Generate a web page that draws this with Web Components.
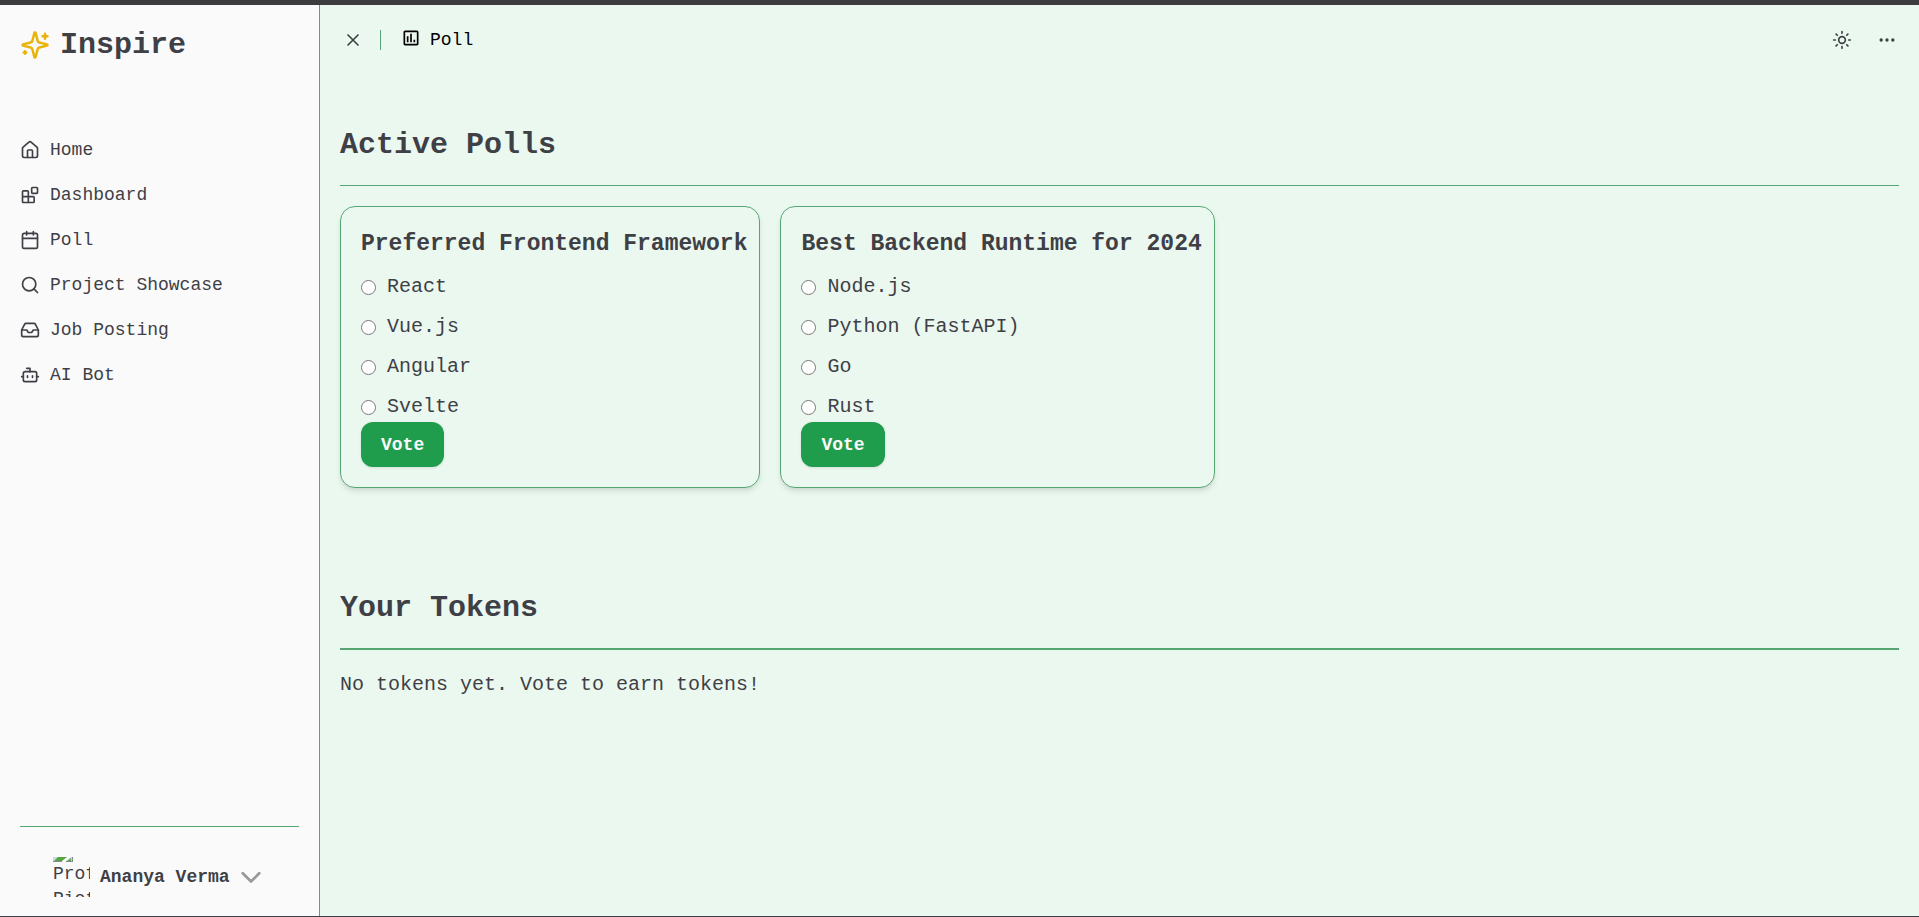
<!DOCTYPE html>
<html lang="en">
<head>
<meta charset="utf-8">
<meta name="viewport" content="width=device-width, initial-scale=1">
<title>Inspire - Poll</title>
<style>
  :root {
    --text: #3f3f46;
    --line: #55a673;
    --canvas: #ebf8ef;
    --panel: #fafafa;
    --accent: #1f9d4c;
    --frame: #3c3c3e;
  }
  body {
    margin: 0;
    color: var(--text);
    background: var(--canvas);
    font-family: "Liberation Mono", "DejaVu Sans Mono", monospace;
    font-size: 20px;
    line-height: 30px;
  }
</style>
</head>
<body>
<app-shell>
  <side-bar slot="side">
    <nav-item icon="home" href="#home">Home</nav-item>
    <nav-item icon="blocks" href="#dashboard">Dashboard</nav-item>
    <nav-item icon="calendar" href="#poll">Poll</nav-item>
    <nav-item icon="search" href="#projects">Project Showcase</nav-item>
    <nav-item icon="inbox" href="#jobs">Job Posting</nav-item>
    <nav-item icon="bot" href="#bot">AI Bot</nav-item>
    <user-menu slot="footer">Ananya Verma</user-menu>
  </side-bar>
  <top-bar>Poll</top-bar>
  <page-section heading="Active Polls">
    <poll-card heading="Preferred Frontend Framework" options="React|Vue.js|Angular|Svelte"></poll-card>
    <poll-card heading="Best Backend Runtime for 2024" options="Node.js|Python (FastAPI)|Go|Rust"></poll-card>
  </page-section>
  <page-section heading="Your Tokens" strong>
    <span>No tokens yet. Vote to earn tokens!</span>
  </page-section>
</app-shell>

<script>
const ICONS = {
  sparkles: '<path d="M9.937 15.5A2 2 0 0 0 8.5 14.063l-6.135-1.582a.5.5 0 0 1 0-.962L8.5 9.936A2 2 0 0 0 9.937 8.5l1.582-6.135a.5.5 0 0 1 .963 0L14.063 8.5A2 2 0 0 0 15.5 9.937l6.135 1.581a.5.5 0 0 1 0 .964L15.5 14.063a2 2 0 0 0-1.437 1.437l-1.582 6.135a.5.5 0 0 1-.963 0z"/><path d="M20 3v4M22 5h-4M4 17v2M5 18H3"/>',
  home: '<path d="M15 21v-8a1 1 0 0 0-1-1h-4a1 1 0 0 0-1 1v8"/><path d="M3 10a2 2 0 0 1 .709-1.528l7-5.999a2 2 0 0 1 2.582 0l7 5.999A2 2 0 0 1 21 10v9a2 2 0 0 1-2 2H5a2 2 0 0 1-2-2z"/>',
  blocks: '<rect width="7" height="7" x="14" y="3" rx="1"/><path d="M10 21V8a1 1 0 0 0-1-1H4a1 1 0 0 0-1 1v12a1 1 0 0 0 1 1h12a1 1 0 0 0 1-1v-5a1 1 0 0 0-1-1H3"/>',
  calendar: '<path d="M8 2v4M16 2v4"/><rect width="18" height="18" x="3" y="4" rx="2"/><path d="M3 10h18"/>',
  search: '<circle cx="11" cy="11" r="8"/><path d="m21 21-4.3-4.3"/>',
  inbox: '<path d="M22 12h-6l-2 3h-4l-2-3H2"/><path d="M5.45 5.11 2 12v6a2 2 0 0 0 2 2h16a2 2 0 0 0 2-2v-6l-3.45-6.89A2 2 0 0 0 16.76 4H7.24a2 2 0 0 0-1.79 1.11z"/>',
  bot: '<path d="M12 8V4H8"/><rect width="16" height="12" x="4" y="8" rx="2"/><path d="M2 14h2M20 14h2M15 13v2M9 13v2"/>',
  close: '<path d="M18 6 6 18M6 6l12 12"/>',
  sun: '<circle cx="12" cy="12" r="4"/><path d="M12 2v2M12 20v2M4.93 4.93l1.41 1.41M17.66 17.66l1.41 1.41M2 12h2M20 12h2M6.34 17.66l-1.41 1.41M19.07 4.93l-1.41 1.41"/>',
  dots: '<circle cx="12" cy="12" r="1"/><circle cx="19" cy="12" r="1"/><circle cx="5" cy="12" r="1"/>',
  chevron: '<path d="m3 8 9 9 9-9"/>',
  chart: '<path fill="currentColor" stroke="none" d="M19 3H5c-1.100 0-2 .9-2 2v14c0 1.100.9 2 2 2h14c1.100 0 2-.9 2-2V5c0-1.100-.9-2-2-2zm0 16H5V5h14v14zM7 10h2v7H7zM11 7h2v10h-2zM15 14h2v3h-2z"/>'
};

function mount(host, html) {
  host.attachShadow({ mode: 'open' }).innerHTML = html;
}

customElements.define('line-icon', class extends HTMLElement {
  connectedCallback() {
    if (this.shadowRoot) return;
    const weight = this.getAttribute('weight') || 2;
    mount(this, `<style>
      :host { display: block; flex: none; width: var(--size, 20px); height: var(--size, 20px); }
      svg { display: block; width: 100%; height: 100%; }
    </style>
    <svg viewBox="0 0 24 24" fill="none" stroke="currentColor" stroke-width="${weight}" stroke-linecap="round" stroke-linejoin="round" aria-hidden="true">${ICONS[this.getAttribute('name')]}</svg>`);
  }
});

customElements.define('app-shell', class extends HTMLElement {
  connectedCallback() {
    mount(this, `<style>
      :host { display: grid; grid-template-columns: 320px minmax(0, 1fr); box-sizing: border-box;
        min-height: 100vh; border-top: 5px solid var(--frame); border-bottom: 1px solid var(--text); }
      main { padding: 0 20px; }
    </style>
    <slot name="side"></slot><main><slot></slot></main>`);
  }
});

customElements.define('side-bar', class extends HTMLElement {
  connectedCallback() {
    mount(this, `<style>
      :host { display: flex; flex-direction: column; box-sizing: border-box; padding: 0 20px;
        background: var(--panel); border-right: 1px solid var(--line); }
      header { display: flex; align-items: center; gap: 10px; height: 80px; font-size: 30px; font-weight: 700; }
      header line-icon { --size: 30px; color: #eab308; }
      nav { display: flex; flex-direction: column; gap: 5px; padding-top: 45px; }
      footer { margin-top: auto; border-top: 1px solid var(--line); }
    </style>
    <header><line-icon name="sparkles"></line-icon><span>Inspire</span></header>
    <nav><slot></slot></nav>
    <footer><slot name="footer"></slot></footer>`);
  }
});

customElements.define('nav-item', class extends HTMLElement {
  connectedCallback() {
    mount(this, `<style>
      :host { display: block; }
      a { display: flex; align-items: center; gap: 10px; height: 40px; color: inherit; text-decoration: none; font-size: 18px; }
    </style>
    <a href="${this.getAttribute('href')}"><line-icon name="${this.getAttribute('icon')}"></line-icon><span><slot></slot></span></a>`);
  }
});

customElements.define('user-menu', class extends HTMLElement {
  connectedCallback() {
    mount(this, `<style>
      :host { display: block; padding: 30px 33px 19px; }
      button { display: flex; align-items: center; gap: 10px; width: 100%; height: 40px; padding: 0; border: 0;
        background: none; color: inherit; font: inherit; font-size: 18px; text-align: left; }
      .avatar { flex: none; width: 37px; height: 40px; overflow: hidden; line-height: 25px; }
      .avatar svg { display: block; width: 20px; height: 5px; }
      .name { font-weight: 700; white-space: nowrap; }
      line-icon { --size: 22px; color: #999; }
    </style>
    <button type="button">
      <span class="avatar">
        <svg viewBox="0 0 20 5" aria-hidden="true"><path fill="#c3d9f3" d="M0 0h20v5H0z"/><path fill="#57a83c" d="M1 4 5 0h10L9 4z"/><path fill="#57a83c" d="m14 4 4-3v3z"/><path fill="#fafafa" d="M14 0h4l-6 5H8z"/><path fill="#888" d="M0 4h9v1H0zM13 4h7v1h-7zM19 0h1v5h-1z"/></svg>
        Profile Picture
      </span>
      <span class="name"><slot></slot></span>
      <line-icon name="chevron" weight="3"></line-icon>
    </button>`);
  }
});

customElements.define('top-bar', class extends HTMLElement {
  connectedCallback() {
    mount(this, `<style>
      :host { display: flex; align-items: center; height: 70px; }
      button { display: grid; place-items: center; width: 25px; height: 35px; padding: 0; border: 0; background: none; color: inherit; }
      .rule { width: 1px; height: 20px; margin: 0 20px 0 15px; background: var(--line); }
      .crumb { display: flex; align-items: center; gap: 9px; color: #000; font-size: 18px; }
      .crumb line-icon { padding-bottom: 5px; }
      .tools { display: flex; gap: 20px; margin-left: auto; }
    </style>
    <button type="button" aria-label="Close sidebar"><line-icon name="close" weight="2"></line-icon></button>
    <span class="rule"></span>
    <span class="crumb"><line-icon name="chart"></line-icon><span><slot></slot></span></span>
    <span class="tools">
      <button type="button" aria-label="Toggle theme"><line-icon name="sun"></line-icon></button>
      <button type="button" aria-label="More"><line-icon name="dots"></line-icon></button>
    </span>`);
  }
});

customElements.define('page-section', class extends HTMLElement {
  connectedCallback() {
    mount(this, `<style>
      :host { display: block; padding-top: 50px; margin-bottom: 50px; }
      h2 { margin: 0; padding-bottom: 20px; font-size: 30px; line-height: 40px; font-weight: 700; border-bottom: 1px solid var(--line); }
      :host([strong]) h2 { border-bottom-width: 2px; }
      .body { display: flex; flex-wrap: wrap; gap: 20px; padding-top: 20px; }
    </style>
    <h2>${this.getAttribute('heading')}</h2>
    <div class="body"><slot></slot></div>`);
  }
});

customElements.define('poll-card', class extends HTMLElement {
  connectedCallback() {
    const heading = this.getAttribute('heading');
    const rows = this.getAttribute('options').split('|').map(o =>
      `<label><input type="radio" name="choice" value="${o}"><span>${o}</span></label>`).join('');
    mount(this, `<style>
      :host { display: block; box-sizing: border-box; padding: 20px 12px 20px 20px; border: 1px solid var(--line);
        border-radius: 15px; box-shadow: 0 4px 6px -1px #0000001a, 0 2px 4px -2px #0000001a; }
      h3 { margin: 0 0 10px; font-size: 23px; line-height: 35px; font-weight: 700; }
      form { display: flex; flex-direction: column; align-items: flex-start; }
      .options { display: grid; gap: 10px; }
      label { display: flex; align-items: center; gap: 11px; height: 30px; }
      input { width: 15px; height: 15px; margin: 0; }
      button { height: 45px; padding: 0 20px; border: 0; border-radius: 12px; background: var(--accent); color: #fafafa;
        font: inherit; font-size: 18px; font-weight: 700; box-shadow: 0 1px 3px #0000001a; }
    </style>
    <h3>${heading}</h3>
    <form>
      <div class="options" role="radiogroup" aria-label="${heading}">${rows}</div>
      <button type="button">Vote</button>
    </form>`);
  }
});
</script>
</body>
</html>
